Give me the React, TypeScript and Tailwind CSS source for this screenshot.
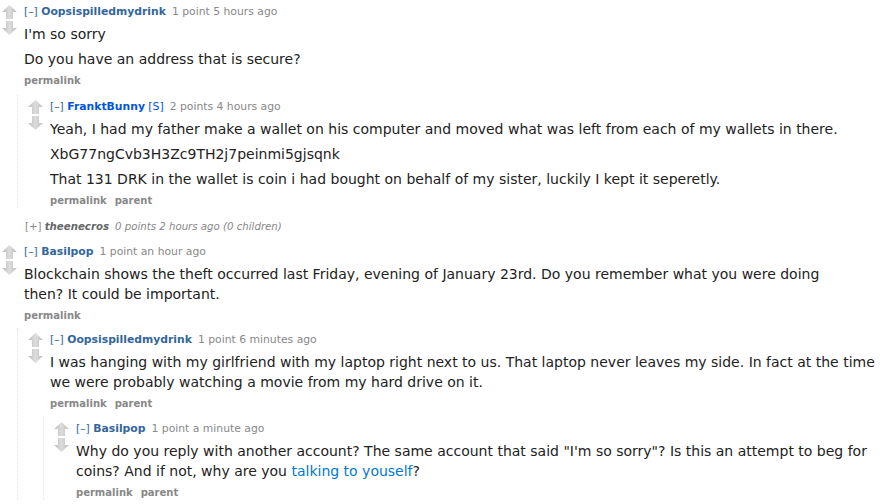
import React from 'react'

const Arrows = () => (
  <div className="flex flex-col items-center gap-[2px] w-[17px] shrink-0 pt-[1px] pl-[1px]">
    <svg width="15" height="14" viewBox="0 0 15 14">
      <defs>
        <linearGradient id="ag" x1="0" y1="0" x2="1" y2="0">
          <stop offset="0" stopColor="#bdbdbd" />
          <stop offset="0.5" stopColor="#dcdcdc" />
          <stop offset="1" stopColor="#bdbdbd" />
        </linearGradient>
      </defs>
      <polygon points="7.5,0 15,7 11,7 11,14 4,14 4,7 0,7" fill="url(#ag)" />
    </svg>
    <svg width="15" height="14" viewBox="0 0 15 14">
      <polygon points="4,0 11,0 11,7 15,7 7.5,14 0,7 4,7" fill="url(#ag)" />
    </svg>
  </div>
)

type Props = {
  user: string
  op?: boolean
  score: string
  children?: React.ReactNode
  body: React.ReactNode[]
  parent?: boolean
  nested?: string
}

const Comment = ({ user, op, score, body, children, parent, nested }: Props) => (
  <div
    className={
      nested
        ? nested + ' ml-[-7px] pt-[4px] pl-[8px] border-l border-dotted border-[#ddf]'
        : 'pt-[4px]'
    }
  >
    <div className="flex gap-[7px]">
      <Arrows />
      <div className="flex-1 min-w-0">
        <div className="pt-[1px] text-[10.8px] leading-[14px] text-[#888] whitespace-nowrap">
          <span className="text-[#369]">[–]</span>{' '}
          <span className={op ? 'font-bold text-[#0055df]' : 'font-bold text-[#369]'}>{user}</span>
          {op && (
            <>
              {' '}
              <span className="text-[#0055df]">[S]</span>
            </>
          )}
          <span className="ml-[6px]">{score}</span>
        </div>
        <div className="mt-[5px] max-w-[840px] pr-[6px] text-[14px] leading-[20px] text-[#222] flex flex-col gap-[5px]">
          {body.map((p, i) => (
            <p key={i}>{p}</p>
          ))}
        </div>
        <div className="mt-[5px] text-[10px] leading-[14px] font-bold text-[#888] flex gap-[8px]">
          <span>permalink</span>
          {parent && <span>parent</span>}
        </div>
        {children}
      </div>
    </div>
  </div>
)

export default function App() {
  return (
    <div className="bg-white w-[887px] h-[504px] overflow-hidden" style={{ fontFamily: '"DejaVu Sans", Verdana, sans-serif' }}>
      <Comment
        user="Oopsispilledmydrink"
        score="1 point 5 hours ago"
        body={["I'm so sorry", 'Do you have an address that is secure?']}
      >
        <Comment
          nested="mt-[7px]"
          parent
          op
          user="FranktBunny"
          score="2 points 4 hours ago"
          body={[
            'Yeah, I had my father make a wallet on his computer and moved what was left from each of my wallets in there.',
            'XbG77ngCvb3H3Zc9TH2j7peinmi5gjsqnk',
            'That 131 DRK in the wallet is coin i had bought on behalf of my sister, luckily I kept it seperetly.',
          ]}
        />
      </Comment>

      <div className="mt-[12px] pl-[25px] text-[10.2px] leading-[14px] italic text-[#888]">
        <span className="not-italic">[+]</span>{' '}
        <span className="font-bold text-[#666]">theenecros</span>
        <span className="ml-[6px]">0 points 2 hours ago (0 children)</span>
      </div>

      <div className="mt-[6px]">
        <Comment
          user="Basilpop"
          score="1 point an hour ago"
          body={[
            'Blockchain shows the theft occurred last Friday, evening of January 23rd. Do you remember what you were doing then? It could be important.',
          ]}
        >
          <Comment
            nested="mt-[5px]"
            parent
            user="Oopsispilledmydrink"
            score="1 point 6 minutes ago"
            body={[
              'I was hanging with my girlfriend with my laptop right next to us. That laptop never leaves my side. In fact at the time we were probably watching a movie from my hard drive on it.',
            ]}
          >
            <Comment
              nested="mt-[6px]"
              parent
              user="Basilpop"
              score="1 point a minute ago"
              body={[
                <>
                  Why do you reply with another account? The same account that said "I'm so sorry"? Is this an attempt to beg for
                  coins? And if not, why are you <span className="text-[#0079d3]">talking to youself</span>?
                </>,
              ]}
            />
          </Comment>
        </Comment>
      </div>
    </div>
  )
}
